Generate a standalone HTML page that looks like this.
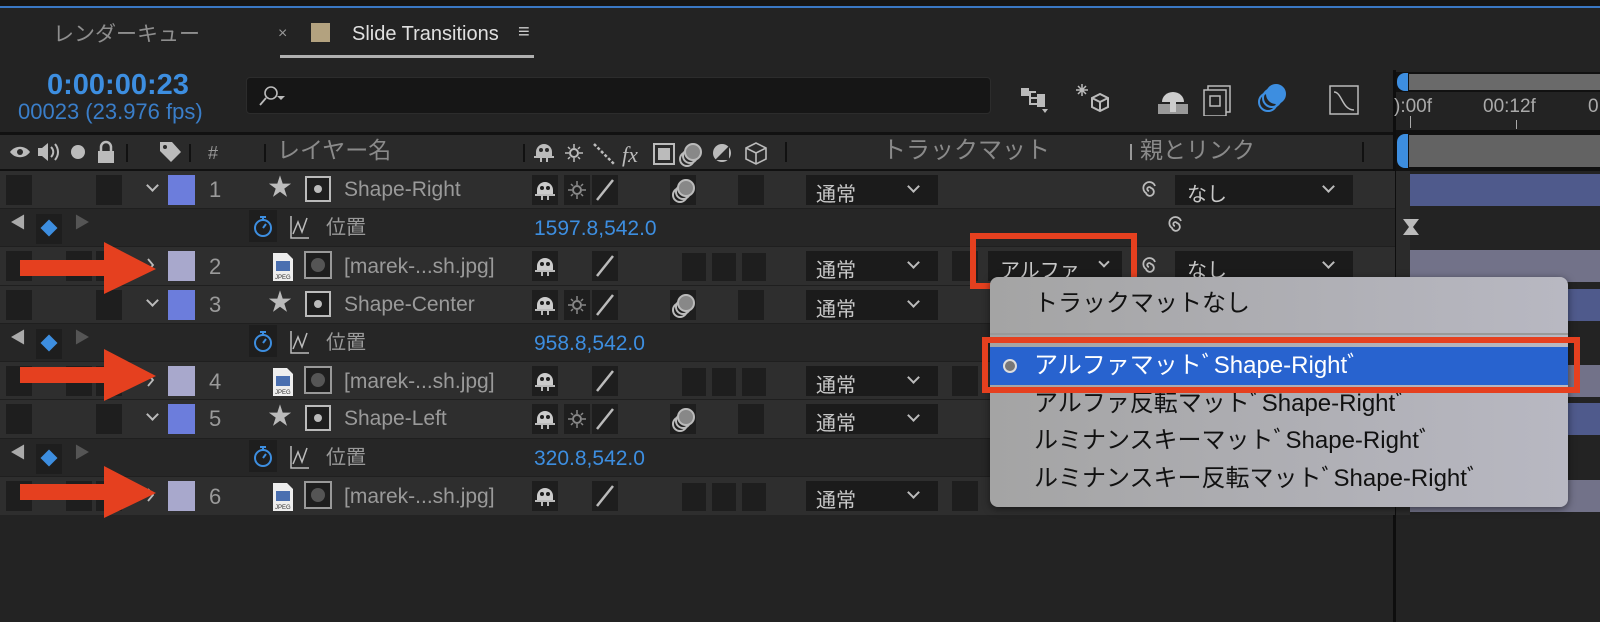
<!DOCTYPE html>
<html><head><meta charset="utf-8"><style>
*{margin:0;padding:0;box-sizing:border-box}
body{width:1600px;height:622px;background:#232323;position:relative;overflow:hidden;font-family:"Liberation Sans","Noto Sans CJK JP",sans-serif;color:#9a9a9a}
.a{position:absolute}
.t{position:absolute;white-space:nowrap;line-height:1}
.ch{position:absolute;width:9px;height:9px;border-right:2px solid #bbb;border-bottom:2px solid #bbb;transform:rotate(45deg)}
.row{position:absolute;left:0;width:1395px;height:38px}
.cb{position:absolute;width:26px;height:30px;background:#1e1e1e}
.num{position:absolute;font-size:22px;color:#9a9a9a;line-height:1}
.nm{position:absolute;font-size:21px;color:#9a9a9a;line-height:1;white-space:nowrap}
.csq{position:absolute;width:27px;height:30px}
.val{position:absolute;font-size:21px;color:#3d8ee0;line-height:1}
.pos{position:absolute;left:326px;font-size:20px;color:#9a9a9a;line-height:1}
.mode{position:absolute;left:806px;width:132px;height:30px;background:#1b1b1b}
.mode span{position:absolute;left:10px;top:3px;font-size:20px;color:#c8c8c8}
.mode i{position:absolute;right:20px;top:7px;width:9px;height:9px;border-right:2px solid #bbb;border-bottom:2px solid #bbb;transform:rotate(45deg)}
.par{position:absolute;left:1175px;width:178px;height:30px;background:#1b1b1b}
.par span{position:absolute;left:12px;top:3px;font-size:20px;color:#c8c8c8}
.par i{position:absolute;right:20px;top:7px;width:9px;height:9px;border-right:2px solid #bbb;border-bottom:2px solid #bbb;transform:rotate(45deg)}
.mi{position:absolute;left:1034px;font-size:24px;color:#111;white-space:nowrap;line-height:1}
</style></head><body>
<div class="a" style="left:0;top:0;width:1600px;height:6px;background:#161616"></div>
<div class="a" style="left:0;top:6px;width:1600px;height:2px;background:#3a78c4"></div>
<div class="t" style="left:53px;top:24px;font-size:21px;color:#8e8e8e">レンダーキュー</div>
<div class="t" style="left:278px;top:26px;font-size:16px;color:#999">×</div>
<div class="a" style="left:311px;top:23px;width:19px;height:19px;background:#b3a27f"></div>
<div class="t" style="left:352px;top:24px;font-size:20px;color:#e0e0e0">Slide Transitions</div>
<div class="t" style="left:518px;top:22px;font-size:20px;color:#ccc">≡</div>
<div class="a" style="left:280px;top:55px;width:254px;height:3px;background:#b0b0b0"></div>
<div class="t" style="left:47px;top:71px;font-size:29px;font-weight:bold;color:#3d8ee0">0:00:00:23</div>
<div class="t" style="left:18px;top:101px;font-size:22px;color:#3a7ec9">00023 (23.976 fps)</div>
<div class="a" style="left:246px;top:77px;width:745px;height:37px;background:#161616;border-radius:4px;border:1px solid #2c2c2c"></div>
<svg class="a" style="left:256px;top:84px" width="36" height="24"><circle cx="15" cy="9" r="6" fill="none" stroke="#bbb" stroke-width="1.6"/><path d="M10 14 L4 21" stroke="#bbb" stroke-width="1.8"/><path d="M21 12 h8 l-4 4z" fill="#bbb"/></svg>
<svg class="a" style="left:1020px;top:80px" width="400" height="36" fill="none" stroke="#bbb" stroke-width="2">
<path d="M4 12h12M10 12v12h10M10 18h10" /><rect x="2" y="9" width="6" height="6" fill="#bbb"/><rect x="18" y="15" width="6" height="5" fill="#bbb"/><rect x="18" y="21" width="6" height="5" fill="#bbb"/><path d="M22 29h6l-3 4z" fill="#bbb" stroke="none"/>
<path d="M72 18l8-4 8 4v9l-8 4-8-4z M72 18l8 4 8-4 M80 22v9"/><path d="M62 4v12M56 10h12M58 6l8 8M66 6l-8 8" stroke-width="1.5"/>
<rect x="138" y="24" width="30" height="10" fill="#999" stroke="none"/><path d="M142 22a11 10 0 0 1 22 0z" fill="#ccc" stroke="none"/><rect x="150" y="20" width="6" height="12" fill="#ccc" stroke="none"/>
<rect x="188" y="6" width="22" height="26" stroke-width="1.5"/><rect x="184" y="10" width="22" height="26" fill="#232323" stroke-width="1.5"/><path d="M190 16h10v10h-10z" stroke-width="1.5"/>
<circle cx="248" cy="22" r="9" stroke="#3d8ee0"/><circle cx="252" cy="18" r="9" stroke="#3d8ee0"/><circle cx="256" cy="14" r="9" fill="#3d8ee0" stroke="#3d8ee0"/>
<rect x="310" y="6" width="28" height="28" stroke-width="1.5"/><path d="M314 12c8 0 8 18 20 18" stroke-width="1.5"/>
</svg>
<div class="a" style="left:0;top:132px;width:1395px;height:3px;background:#111"></div>
<div class="a" style="left:0;top:135px;width:1395px;height:35px;background:#2a2a2a"></div>
<div class="a" style="left:0;top:169px;width:1395px;height:2px;background:#111"></div>
<svg class="a" style="left:8px;top:140px" width="800" height="26">
<path d="M2 12c5-7 15-7 20 0c-5 7-15 7-20 0z" fill="#bbb"/><circle cx="12" cy="12" r="3" fill="#2a2a2a"/>
<path d="M30 8h4l6-5v18l-6-5h-4z" fill="#bbb"/><path d="M43 7c3 3 3 7 0 10M47 4c4 5 4 11 0 16" stroke="#bbb" stroke-width="2" fill="none"/>
<circle cx="70" cy="12" r="7" fill="#bbb"/>
<rect x="90" y="11" width="16" height="12" fill="#bbb"/><path d="M93 11v-4a5 5 0 0 1 10 0v4" stroke="#bbb" stroke-width="2.5" fill="none"/>
<rect x="118" y="4" width="2" height="18" fill="#111"/>
<path d="M152 2h12l9 10-10 10-11-11z" fill="#bbb"/><circle cx="157" cy="7" r="2" fill="#2a2a2a"/>
<rect x="181" y="4" width="2" height="18" fill="#111"/>
<rect x="256" y="4" width="2" height="18" fill="#111"/>
<rect x="515" y="4" width="2" height="18" fill="#111"/>
</svg>
<div class="t" style="left:208px;top:144px;font-size:18px;color:#999">#</div>
<div class="t" style="left:277px;top:139px;font-size:23px;color:#8a8a8a">レイヤー名</div>
<svg class="a" style="left:530px;top:138px" width="260" height="30" fill="none" stroke="#bbb" stroke-width="2">
<path d="M6 14a8 8 0 0 1 16 0v4h-16z" fill="#bbb" stroke="none"/><circle cx="11" cy="12" r="2" fill="#2a2a2a" stroke="none"/><circle cx="17" cy="12" r="2" fill="#2a2a2a" stroke="none"/><path d="M4 19h20M11 18v6M17 18v6"/>
<circle cx="44" cy="15" r="4"/><path d="M44 6v4M44 20v4M35 15h4M49 15h4M38 9l2 2M48 19l2 2M38 21l2-2M48 11l2-2" stroke-width="1.5"/>
<path d="M64 6l20 20" stroke-dasharray="3 2" stroke-width="2.5"/>
<text x="92" y="24" font-size="22" font-style="italic" fill="#bbb" stroke="none" font-family="Liberation Serif">fx</text>
<rect x="124" y="6" width="20" height="20"/><path d="M128 10h12v12h-12z" fill="#bbb" stroke="none"/>
<circle cx="157" cy="21" r="7"/><circle cx="160" cy="18" r="7"/><circle cx="163" cy="14" r="8" fill="#888"/>
<circle cx="192" cy="15" r="9" fill="#bbb" stroke="none"/><path d="M185 22l14-14v14z" fill="#2a2a2a" stroke="none"/>
<path d="M216 10l10-5 10 5v11l-10 5-10-5z M216 10l10 5 10-5 M226 15v11" stroke-width="1.6"/>
</svg>
<div class="a" style="left:785px;top:142px;width:2px;height:20px;background:#111"></div>
<div class="t" style="left:882px;top:139px;font-size:24px;color:#8a8a8a">トラックマット</div>
<div class="a" style="left:1130px;top:144px;width:2px;height:16px;background:#999"></div>
<div class="t" style="left:1140px;top:139px;font-size:23px;color:#8a8a8a">親とリンク</div>
<div class="a" style="left:1362px;top:142px;width:2px;height:20px;background:#111"></div>
<div class="a" style="left:1395px;top:64px;width:205px;height:558px;background:#232323"></div>
<div class="a" style="left:1393px;top:70px;width:3px;height:552px;background:#0e0e0e"></div>
<div class="a" style="left:1396px;top:72px;width:204px;height:20px;background:#111"></div>
<div class="a" style="left:1409px;top:74px;width:191px;height:16px;background:#6a6a6a"></div>
<div class="a" style="left:1397px;top:73px;width:11px;height:18px;background:#3d8ee0;border-radius:8px 0 0 8px"></div>
<div class="t" style="left:1394px;top:97px;font-size:19px;color:#aaa">):00f</div>
<div class="t" style="left:1483px;top:97px;font-size:19px;color:#aaa">00:12f</div>
<div class="t" style="left:1588px;top:97px;font-size:19px;color:#aaa">0</div>
<div class="a" style="left:1410px;top:116px;width:1px;height:12px;background:#aaa"></div>
<div class="a" style="left:1516px;top:120px;width:1px;height:9px;background:#aaa"></div>
<div class="a" style="left:1396px;top:130px;width:204px;height:4px;background:#111"></div>
<div class="a" style="left:1396px;top:134px;width:204px;height:34px;background:#111"></div>
<div class="a" style="left:1409px;top:135px;width:191px;height:32px;background:#636363"></div>
<div class="a" style="left:1397px;top:134px;width:11px;height:34px;background:#3d8ee0;border-radius:8px 0 0 8px"></div>
<div class="a" style="left:1396px;top:168px;width:204px;height:3px;background:#111"></div>

<div class="row" style="top:171px;background:#2e2e2e"></div>
<div class="row" style="top:209px;background:#262626"></div>
<div class="row" style="top:247px;background:#2e2e2e"></div>
<div class="row" style="top:286px;background:#2e2e2e"></div>
<div class="row" style="top:324px;background:#262626"></div>
<div class="row" style="top:362px;background:#2e2e2e"></div>
<div class="row" style="top:400px;background:#2e2e2e"></div>
<div class="row" style="top:439px;background:#262626"></div>
<div class="row" style="top:477px;background:#2e2e2e"></div>
<div class="a" style="left:0;top:208px;width:1395px;height:1px;background:#1f1f1f"></div>
<div class="a" style="left:0;top:246px;width:1395px;height:1px;background:#1f1f1f"></div>
<div class="a" style="left:0;top:285px;width:1395px;height:1px;background:#1f1f1f"></div>
<div class="a" style="left:0;top:323px;width:1395px;height:1px;background:#1f1f1f"></div>
<div class="a" style="left:0;top:361px;width:1395px;height:1px;background:#1f1f1f"></div>
<div class="a" style="left:0;top:399px;width:1395px;height:1px;background:#1f1f1f"></div>
<div class="a" style="left:0;top:438px;width:1395px;height:1px;background:#1f1f1f"></div>
<div class="a" style="left:0;top:476px;width:1395px;height:1px;background:#1f1f1f"></div>
<div class="a" style="left:1396px;top:171px;width:14px;height:344px;background:#2b2b2b"></div>
<div class="a" style="left:1410px;top:174px;width:190px;height:32px;background:#4f5a8c"></div>
<div class="a" style="left:1410px;top:250px;width:190px;height:32px;background:#727289"></div>
<div class="a" style="left:1410px;top:289px;width:190px;height:32px;background:#4f5a8c"></div>
<div class="a" style="left:1410px;top:365px;width:190px;height:32px;background:#727289"></div>
<div class="a" style="left:1410px;top:403px;width:190px;height:32px;background:#4f5a8c"></div>
<div class="a" style="left:1410px;top:480px;width:190px;height:32px;background:#727289"></div>
<svg class="a" style="left:1402px;top:218px" width="20" height="20"><path d="M1 1h16l-6 8 6 8h-16l6-8z" fill="#bbb"/></svg>

<!-- Row 1 -->
<div class="cb" style="left:6px;top:175px"></div><div class="cb" style="left:96px;top:175px"></div>
<div class="ch" style="left:148px;top:181px"></div>
<div class="csq" style="left:168px;top:175px;background:#6c7ddc"></div>
<div class="num" style="left:209px;top:179px">1</div>
<div class="t" style="left:268px;top:176px;font-size:24px;color:#bbb">★</div>
<div class="a" style="left:305px;top:176px;width:26px;height:26px;background:#1e1e1e;border:2px solid #bbb"><div class="a" style="left:7px;top:7px;width:8px;height:8px;border-radius:50%;background:#bbb"></div></div>
<div class="nm" style="left:344px;top:179px">Shape-Right</div>
<div class="mode" style="top:175px"><span>通常</span><i></i></div>
<div class="par" style="top:175px"><span>なし</span><i></i></div>
<div class="cb" style="left:738px;top:175px"></div>
<!-- Pos 1 -->
<div class="t" style="left:10px;top:216px;font-size:16px;color:#aaa">◀</div>
<div class="a" style="left:36px;top:214px;width:26px;height:30px;background:#1e1e1e"></div>
<div class="a" style="left:43px;top:222px;width:12px;height:12px;background:#3d8ee0;transform:rotate(45deg)"></div>
<div class="t" style="left:74px;top:216px;font-size:16px;color:#555">▶</div>
<div class="pos" style="top:218px">位置</div>
<div class="val" style="left:534px;top:218px">1597.8,542.0</div>
<!-- Row 2 -->
<div class="cb" style="left:6px;top:251px"></div><div class="cb" style="left:66px;top:251px"></div><div class="cb" style="left:96px;top:251px"></div>
<div class="csq" style="left:168px;top:251px;background:#a8a8cc"></div>
<div class="num" style="left:209px;top:256px">2</div>
<div class="nm" style="left:344px;top:256px">[marek-...sh.jpg]</div>
<div class="mode" style="top:251px"><span>通常</span><i></i></div>
<div class="a" style="left:952px;top:251px;width:26px;height:30px;background:#1e1e1e"></div>
<div class="a" style="left:988px;top:251px;width:134px;height:30px;background:#1b1b1b"><span style="position:absolute;left:12px;top:3px;font-size:20px;color:#c8c8c8">アルファ</span><i style="position:absolute;right:14px;top:7px;width:8px;height:8px;border-right:2px solid #bbb;border-bottom:2px solid #bbb;transform:rotate(45deg)"></i></div>
<div class="par" style="top:251px"><span>なし</span><i></i></div>
<!-- Row 3 -->
<div class="cb" style="left:6px;top:290px"></div><div class="cb" style="left:96px;top:290px"></div>
<div class="ch" style="left:148px;top:296px"></div>
<div class="csq" style="left:168px;top:290px;background:#6c7ddc"></div>
<div class="num" style="left:209px;top:294px">3</div>
<div class="t" style="left:268px;top:291px;font-size:24px;color:#bbb">★</div>
<div class="a" style="left:305px;top:291px;width:26px;height:26px;background:#1e1e1e;border:2px solid #bbb"><div class="a" style="left:7px;top:7px;width:8px;height:8px;border-radius:50%;background:#bbb"></div></div>
<div class="nm" style="left:344px;top:294px">Shape-Center</div>
<div class="mode" style="top:290px"><span>通常</span><i></i></div>
<div class="cb" style="left:738px;top:290px"></div>
<!-- Pos 2 -->
<div class="t" style="left:10px;top:331px;font-size:16px;color:#aaa">◀</div>
<div class="a" style="left:36px;top:329px;width:26px;height:30px;background:#1e1e1e"></div>
<div class="a" style="left:43px;top:337px;width:12px;height:12px;background:#3d8ee0;transform:rotate(45deg)"></div>
<div class="t" style="left:74px;top:331px;font-size:16px;color:#555">▶</div>
<div class="pos" style="top:333px">位置</div>
<div class="val" style="left:534px;top:333px">958.8,542.0</div>
<!-- Row 4 -->
<div class="cb" style="left:6px;top:366px"></div><div class="cb" style="left:66px;top:366px"></div><div class="cb" style="left:96px;top:366px"></div>
<div class="csq" style="left:168px;top:366px;background:#a8a8cc"></div>
<div class="num" style="left:209px;top:371px">4</div>
<div class="nm" style="left:344px;top:371px">[marek-...sh.jpg]</div>
<div class="mode" style="top:366px"><span>通常</span><i></i></div>
<div class="a" style="left:952px;top:366px;width:26px;height:30px;background:#1e1e1e"></div>
<!-- Row 5 -->
<div class="cb" style="left:6px;top:404px"></div><div class="cb" style="left:96px;top:404px"></div>
<div class="ch" style="left:148px;top:410px"></div>
<div class="csq" style="left:168px;top:404px;background:#6c7ddc"></div>
<div class="num" style="left:209px;top:408px">5</div>
<div class="t" style="left:268px;top:405px;font-size:24px;color:#bbb">★</div>
<div class="a" style="left:305px;top:405px;width:26px;height:26px;background:#1e1e1e;border:2px solid #bbb"><div class="a" style="left:7px;top:7px;width:8px;height:8px;border-radius:50%;background:#bbb"></div></div>
<div class="nm" style="left:344px;top:408px">Shape-Left</div>
<div class="mode" style="top:404px"><span>通常</span><i></i></div>
<div class="cb" style="left:738px;top:404px"></div>
<!-- Pos 3 -->
<div class="t" style="left:10px;top:446px;font-size:16px;color:#aaa">◀</div>
<div class="a" style="left:36px;top:444px;width:26px;height:30px;background:#1e1e1e"></div>
<div class="a" style="left:43px;top:452px;width:12px;height:12px;background:#3d8ee0;transform:rotate(45deg)"></div>
<div class="t" style="left:74px;top:446px;font-size:16px;color:#555">▶</div>
<div class="pos" style="top:448px">位置</div>
<div class="val" style="left:534px;top:448px">320.8,542.0</div>
<!-- Row 6 -->
<div class="cb" style="left:6px;top:481px"></div><div class="cb" style="left:66px;top:481px"></div><div class="cb" style="left:96px;top:481px"></div>
<div class="csq" style="left:168px;top:481px;background:#a8a8cc"></div>
<div class="num" style="left:209px;top:486px">6</div>
<div class="nm" style="left:344px;top:486px">[marek-...sh.jpg]</div>
<div class="mode" style="top:481px"><span>通常</span><i></i></div>
<div class="a" style="left:952px;top:481px;width:26px;height:30px;background:#1e1e1e"></div>

<svg class="a" style="left:0;top:0" width="1395" height="622" fill="none" stroke="#bbb" stroke-width="2">
<defs>
<g id="puppet"><rect x="-2" y="-2" width="26" height="30" fill="#1e1e1e" stroke="none"/><path d="M3 13a8 8 0 0 1 16 0v4h-16z" fill="#ccc" stroke="none"/><circle cx="8" cy="11" r="2" fill="#1e1e1e" stroke="none"/><circle cx="14" cy="11" r="2" fill="#1e1e1e" stroke="none"/><path d="M1 18h20M8 17v6M14 17v6"/></g>
<g id="sun"><rect x="-2" y="-2" width="26" height="30" fill="#1e1e1e" stroke="none"/><circle cx="11" cy="13" r="4" stroke="#888"/><path d="M11 4v4M11 18v4M2 13h4M16 13h4M5 7l2 2M15 17l2 2M5 19l2-2M15 9l2-2" stroke="#888" stroke-width="1.5"/></g>
<g id="slash"><rect x="-2" y="-2" width="26" height="30" fill="#1e1e1e" stroke="none"/><path d="M3 23L19 3" stroke-width="2.5"/></g>
<g id="circ"><rect x="-2" y="-2" width="26" height="30" fill="#1e1e1e" stroke="none"/><circle cx="8" cy="18" r="7"/><circle cx="11" cy="15" r="7"/><circle cx="14" cy="11" r="8" fill="#888"/></g>
<g id="stop"><rect x="-3" y="-3" width="28" height="32" fill="#1e1e1e" stroke="none"/><circle cx="11" cy="15" r="8" stroke="#3d8ee0"/><path d="M8 4h6M11 4v3M11 15l3-4" stroke="#3d8ee0"/></g>
<g id="graph"><path d="M2 2v22h18M4 20l5-12 4 10 5-14" stroke-width="1.5"/></g>
<g id="jpg"><path d="M0 0h14l6 6v22h-20z" fill="#eee" stroke="none"/><rect x="3" y="8" width="14" height="10" fill="#4a6fb0" stroke="none"/><text x="2" y="26" font-size="6" fill="#333" stroke="none" font-family="Liberation Sans">JPEG</text></g>
<g id="msk"><rect x="0" y="0" width="26" height="26" fill="#1e1e1e" stroke="#999"/><circle cx="13" cy="13" r="7" fill="#555" stroke="none"/></g>
<g id="spiral"><path d="M11 13a2 2 0 1 1 2 -3a4 4 0 1 1 -5 5a6 6 0 1 1 9 -7" stroke-width="1.8"/></g>
</defs>
<use href="#puppet" x="534" y="177"/><use href="#sun" x="566" y="177"/><use href="#slash" x="594" y="177"/><use href="#circ" x="672" y="177"/>
<use href="#puppet" x="534" y="253"/><use href="#slash" x="594" y="253"/>
<use href="#puppet" x="534" y="292"/><use href="#sun" x="566" y="292"/><use href="#slash" x="594" y="292"/><use href="#circ" x="672" y="292"/>
<use href="#puppet" x="534" y="368"/><use href="#slash" x="594" y="368"/>
<use href="#puppet" x="534" y="406"/><use href="#sun" x="566" y="406"/><use href="#slash" x="594" y="406"/><use href="#circ" x="672" y="406"/>
<use href="#puppet" x="534" y="483"/><use href="#slash" x="594" y="483"/>
<use href="#stop" x="252" y="213"/><use href="#graph" x="289" y="214"/>
<use href="#stop" x="252" y="328"/><use href="#graph" x="289" y="329"/>
<use href="#stop" x="252" y="443"/><use href="#graph" x="289" y="444"/>
<use href="#jpg" x="273" y="253"/><use href="#msk" x="305" y="252"/>
<use href="#jpg" x="273" y="368"/><use href="#msk" x="305" y="367"/>
<use href="#jpg" x="273" y="483"/><use href="#msk" x="305" y="482"/>
<use href="#spiral" x="1138" y="178"/><use href="#spiral" x="1138" y="254"/><use href="#spiral" x="1164" y="213"/>
<g fill="#1e1e1e" stroke="none"><rect x="682" y="253" width="24" height="28"/><rect x="712" y="253" width="24" height="28"/><rect x="742" y="253" width="24" height="28"/>
<rect x="682" y="368" width="24" height="28"/><rect x="712" y="368" width="24" height="28"/><rect x="742" y="368" width="24" height="28"/>
<rect x="682" y="483" width="24" height="28"/><rect x="712" y="483" width="24" height="28"/><rect x="742" y="483" width="24" height="28"/></g>
<g stroke="#bbb" stroke-width="1.8"><path d="M148 259l5 6-5 6M148 374l5 6-5 6M148 489l5 6-5 6"/></g>
<g fill="#e5401f" stroke="none">
<path d="M20 260h84v-18l52 27-52 25v-18h-84z"/>
<path d="M20 367h84v-18l52 27-52 25v-18h-84z"/>
<path d="M20 484h84v-18l52 27-52 25v-18h-84z"/>
</g>
</svg>
<div class="a" style="left:970px;top:233px;width:167px;height:56px;border:6px solid #e5401f"></div>
<div class="a" style="left:990px;top:277px;width:578px;height:230px;border-radius:8px;background:linear-gradient(90deg,#a4a4a4,#b8b8c2);box-shadow:0 2px 8px rgba(0,0,0,.5)"></div>
<div class="mi" style="top:292px">トラックマットなし</div>
<div class="a" style="left:990px;top:333px;width:578px;height:2px;background:#999"></div>
<div class="a" style="left:990px;top:347px;width:578px;height:38px;background:#2863cf"></div>
<div class="a" style="left:1003px;top:359px;width:14px;height:14px;border-radius:50%;background:#777;border:2px solid #ddd"></div>
<div class="mi" style="top:354px;color:#fff">アルファマットﾞShape-Rightﾞ</div>
<div class="mi" style="top:392px">アルファ反転マットﾞShape-Rightﾞ</div>
<div class="mi" style="top:429px">ルミナンスキーマットﾞShape-Rightﾞ</div>
<div class="mi" style="top:467px">ルミナンスキー反転マットﾞShape-Rightﾞ</div>
<div class="a" style="left:982px;top:337px;width:598px;height:56px;border:6px solid #e5401f"></div>
</body></html>
